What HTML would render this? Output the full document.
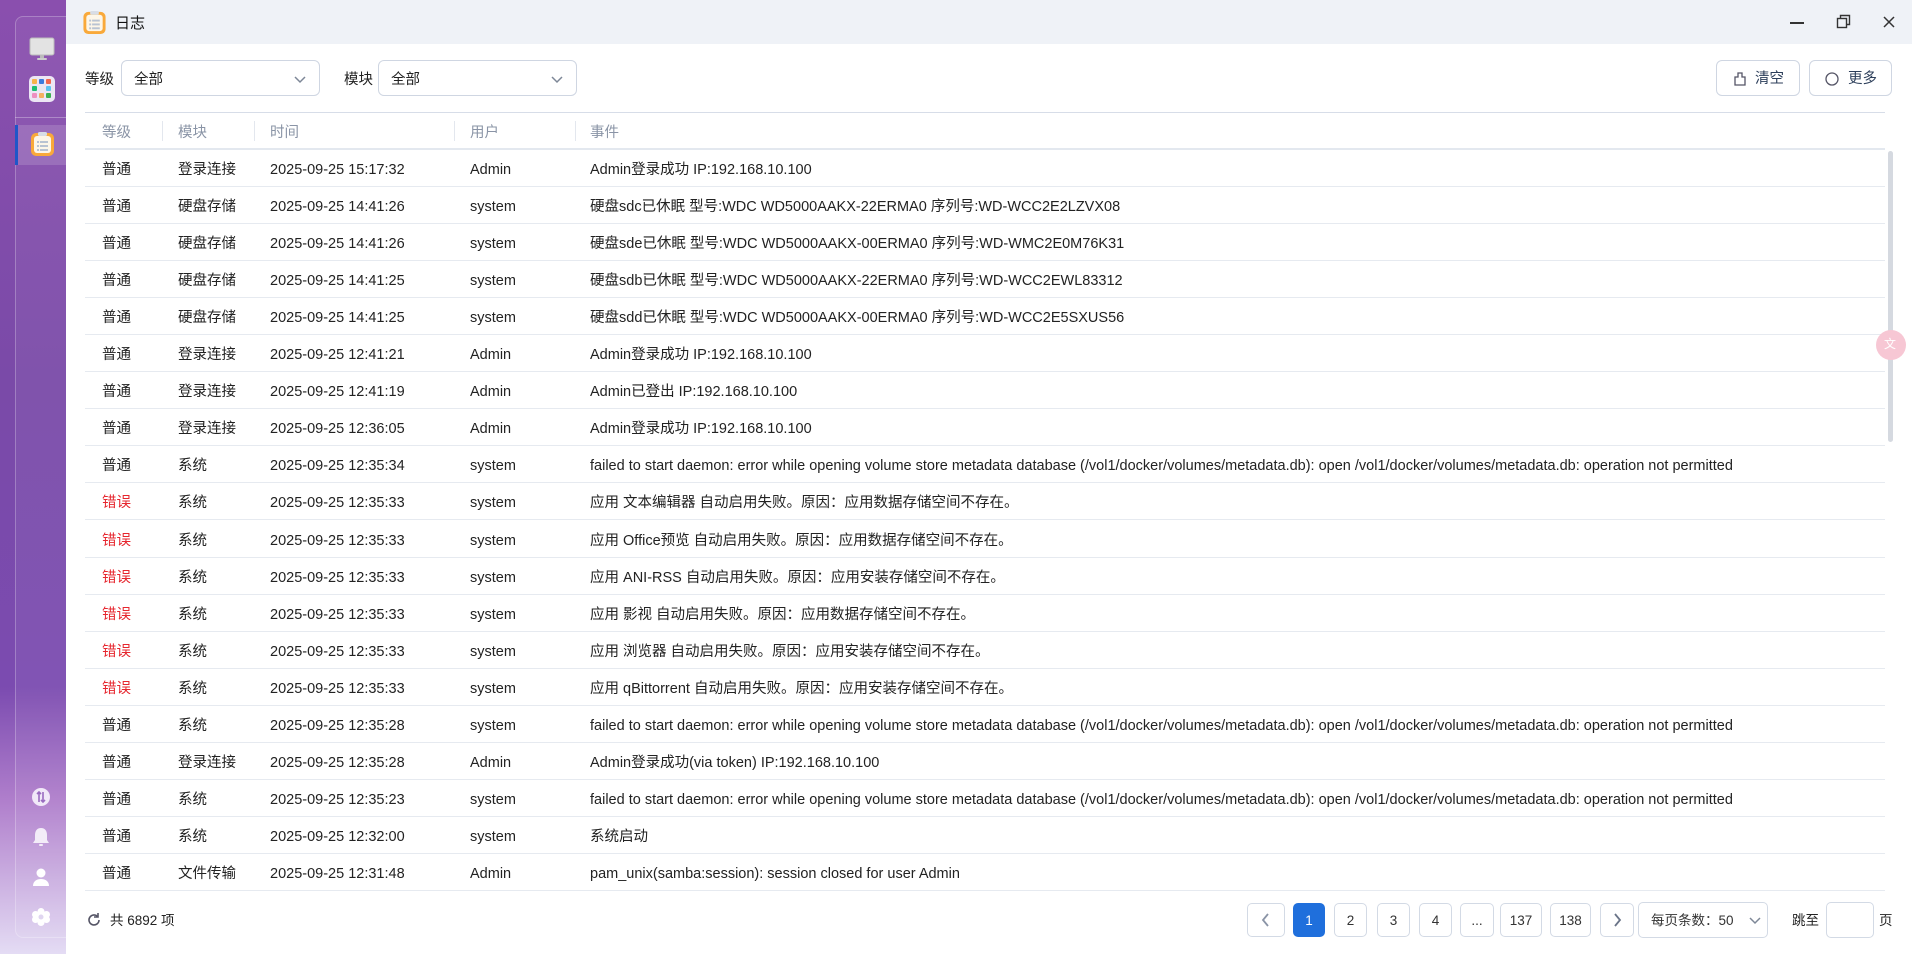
<!DOCTYPE html>
<html><head><meta charset="utf-8">
<style>
*{box-sizing:border-box;margin:0;padding:0}
body{width:1912px;height:954px;overflow:hidden;font-family:"Liberation Sans","Noto Sans CJK SC",sans-serif;font-size:14.5px;color:#222;background:#fff;position:relative}
.side{position:absolute;left:0;top:0;width:66px;height:954px;background:linear-gradient(180deg,#8a4fae 0%,#7a4aa8 40%,#7b4bb0 72%,#b07fcc 84%,#e4dcf4 100%)}
.panel{position:absolute;left:15px;top:16px;width:52px;height:922px;border:1px solid rgba(255,255,255,.25);border-right:none;border-radius:8px 0 0 8px;background:rgba(255,255,255,.05)}
.win{position:absolute;left:66px;top:0;width:1846px;height:954px;background:#fff}
.title{position:absolute;left:0;top:0;width:1846px;height:44px;background:#eff2f7}
.abs{position:absolute}
.sel{position:absolute;top:60px;height:36px;border:1px solid #cfd6e2;border-radius:6px;background:#fff}
.sel span{position:absolute;left:12px;top:2px;line-height:34px}
.chev{position:absolute;right:12px;top:11px}
.btn{position:absolute;top:60px;height:36px;border:1px solid #cfd6e2;border-radius:6px;background:#fff;color:#2c3e5a}
.hdr{position:absolute;left:19px;top:112px;width:1800px;height:38px;border-top:1px solid #d7dde8;border-bottom:2px solid #e3e8ef;color:#8a94a6}
.hdr div{position:absolute;top:3px;line-height:35px}
.hdr i{position:absolute;top:8px;width:1px;height:20px;background:#e3e7ee}
.row{position:absolute;left:19px;width:1800px;height:37px;border-bottom:1px solid #e6eaf0}
.row div{position:absolute;top:2px;line-height:36px;white-space:nowrap}
.r{color:#e6262e}
.pg{position:absolute;top:903px;height:34px;border:1px solid #d3dae5;border-radius:5px;text-align:center;line-height:33px;font-size:13.5px;color:#333;background:#fff}
</style></head><body>
<div class="side"><div class="panel"></div>
<svg class="abs" style="left:29px;top:37px" width="26" height="24" viewBox="0 0 26 24"><rect x="1" y="1" width="24" height="17" rx="2" fill="#e3e3e3" stroke="#bbb"/><rect x="11" y="18" width="4" height="3" fill="#bbb"/><rect x="8" y="21" width="10" height="2" rx="1" fill="#ccc"/></svg>
<div class="abs" style="left:29px;top:76px;width:26px;height:26px;border-radius:5px;background:#ece6f4"></div>
<svg class="abs" style="left:32px;top:79px" width="20" height="20"><rect x="0" y="0" width="5" height="5" rx="1" fill="#f8b34a"/><rect x="7" y="0" width="5" height="5" rx="1" fill="#3a7bde"/><rect x="14" y="0" width="5" height="5" rx="1" fill="#f2674e"/><rect x="0" y="7" width="5" height="5" rx="1" fill="#1fbf72"/><rect x="7" y="7" width="5" height="5" rx="1" fill="#e8e8f0"/><rect x="14" y="7" width="5" height="5" rx="1" fill="#5ec3f0"/><rect x="0" y="14" width="5" height="5" rx="1" fill="#ee8fc0"/><rect x="7" y="14" width="5" height="5" rx="1" fill="#f3b060"/><rect x="14" y="14" width="5" height="5" rx="1" fill="#3cb050"/></svg>
<div class="abs" style="left:15px;top:117px;width:51px;height:1px;background:rgba(255,255,255,.3)"></div>
<div class="abs" style="left:15px;top:125px;width:51px;height:40px;background:rgba(255,255,255,.15)"></div>
<div class="abs" style="left:15px;top:125px;width:3px;height:40px;background:#1f56c8"></div>
<svg class="abs" style="left:30px;top:131px" width="25" height="26" viewBox="0 0 25 26"><rect x="1" y="2" width="23" height="23" rx="5" fill="#f9a93a"/><rect x="4" y="5" width="17" height="17" rx="3" fill="#fdf6e8"/><rect x="8" y="1" width="9" height="4" rx="1.5" fill="#d8dde6"/><g fill="#b9c3d2"><rect x="7" y="10" width="2" height="2"/><rect x="10" y="10" width="8" height="2"/><rect x="7" y="14" width="2" height="2"/><rect x="10" y="14" width="8" height="2"/><rect x="7" y="18" width="2" height="2"/><rect x="10" y="18" width="8" height="2"/></g></svg>
<svg class="abs" style="left:31px;top:787px" width="20" height="20"><circle cx="10" cy="10" r="9" fill="#f1e8f8"/><path d="M8 5v10M6 7l2-2 2 2M12 15V5M10 13l2 2 2-2" stroke="#9a6cc0" stroke-width="1.6" fill="none"/></svg>
<svg class="abs" style="left:31px;top:826px" width="20" height="22"><path d="M10 2c-4 0-6 3-6 7v5l-2 3h16l-2-3V9c0-4-2-7-6-7z" fill="#f3ecf8"/><rect x="8" y="18" width="4" height="2" rx="1" fill="#f3ecf8"/></svg>
<svg class="abs" style="left:31px;top:867px" width="20" height="20"><circle cx="10" cy="6" r="4.5" fill="#fff"/><path d="M2 19c0-5 4-7 8-7s8 2 8 7z" fill="#fff"/></svg>
<svg class="abs" style="left:31px;top:907px" width="20" height="20"><g fill="#fff"><circle cx="10" cy="4.5" r="3.5"/><circle cx="10" cy="15.5" r="3.5"/><circle cx="4.5" cy="7.5" r="3.5"/><circle cx="15.5" cy="7.5" r="3.5"/><circle cx="4.5" cy="12.5" r="3.5"/><circle cx="15.5" cy="12.5" r="3.5"/><circle cx="10" cy="10" r="5"/></g><circle cx="10" cy="10" r="2.5" fill="#e0d6f0"/></svg>
</div>
<div class="win">
<div class="title">
<svg class="abs" style="left:16px;top:10px" width="25" height="25" viewBox="0 0 25 26"><rect x="1" y="2" width="23" height="23" rx="5" fill="#f9a93a"/><rect x="4" y="5" width="17" height="17" rx="3" fill="#fdf6e8"/><rect x="8" y="1" width="9" height="4" rx="1.5" fill="#d8dde6"/><g fill="#b9c3d2"><rect x="7" y="10" width="2" height="2"/><rect x="10" y="10" width="8" height="2"/><rect x="7" y="14" width="2" height="2"/><rect x="10" y="14" width="8" height="2"/><rect x="7" y="18" width="2" height="2"/><rect x="10" y="18" width="8" height="2"/></g></svg>
<div class="abs" style="left:49px;top:2px;line-height:44px;font-size:15px;color:#111">日志</div>
<div class="abs" style="left:1724px;top:22px;width:14px;height:1.5px;background:#333"></div>
<svg class="abs" style="left:1770px;top:14px" width="15" height="15"><rect x="1.5" y="4.5" width="9" height="9" fill="none" stroke="#333" stroke-width="1.4"/><path d="M4.5 4.5V1.5h9v9h-3" fill="none" stroke="#333" stroke-width="1.4"/></svg>
<svg class="abs" style="left:1816px;top:15px" width="14" height="14"><path d="M2 2l10 10M12 2L2 12" stroke="#333" stroke-width="1.5"/></svg>
</div>
<div class="abs" style="left:19px;top:62px;line-height:36px">等级</div>
<div class="sel" style="left:55px;width:199px"><span>全部</span><svg class="chev" width="14" height="14"><path d="M2 5l5 5 5-5" stroke="#7d8797" stroke-width="1.5" fill="none"/></svg></div>
<div class="abs" style="left:278px;top:62px;line-height:36px">模块</div>
<div class="sel" style="left:312px;width:199px"><span>全部</span><svg class="chev" width="14" height="14"><path d="M2 5l5 5 5-5" stroke="#7d8797" stroke-width="1.5" fill="none"/></svg></div>
<div class="btn" style="left:1650px;width:84px"><svg class="abs" style="left:16px;top:11px" width="14" height="14"><path d="M5 1h4v4h3v8H2V5h3z" fill="none" stroke="#556" stroke-width="1.3"/></svg><span class="abs" style="left:38px;top:1px;line-height:34px">清空</span></div>
<div class="btn" style="left:1743px;width:83px"><svg class="abs" style="left:15px;top:11px" width="14" height="14"><circle cx="7" cy="7" r="6" fill="none" stroke="#556" stroke-width="1.3"/></svg><span class="abs" style="left:38px;top:1px;line-height:34px">更多</span></div>
<div class="hdr"><div style="left:17px">等级</div><i style="left:77px"></i><div style="left:93px">模块</div><i style="left:169px"></i><div style="left:185px">时间</div><i style="left:369px"></i><div style="left:385px">用户</div><i style="left:490px"></i><div style="left:505px">事件</div></div>
<div id="rows"></div>
<div class="abs" style="left:1822px;top:151px;width:5px;height:291px;border-radius:3px;background:#d5d9e0"></div>
<div class="abs" style="left:1810px;top:330px;width:30px;height:30px;border-radius:15px;background:#f7c7d4"></div>
<div class="abs" style="left:1818px;top:335px;font-size:12px;color:#fff">文</div>
<svg class="abs" style="left:20px;top:912px" width="16" height="16"><path d="M13 8a5 5 0 1 1-1.6-3.7" fill="none" stroke="#556" stroke-width="1.6"/><path d="M12 1v4H8" fill="none" stroke="#556" stroke-width="1.6"/></svg>
<div class="abs" style="left:44px;top:904px;line-height:34px;font-size:13.5px">共 6892 项</div>
<div class="pg" style="left:1181px;width:38px;color:#99a"><svg width="12" height="32"><path d="M8 10l-5 6 5 6" stroke="#8a94a6" stroke-width="1.8" fill="none"/></svg></div>
<div class="pg" style="left:1227px;width:32px;background:#1f6fdc;border-color:#1f6fdc;color:#fff">1</div>
<div class="pg" style="left:1268px;width:33px">2</div>
<div class="pg" style="left:1311px;width:33px">3</div>
<div class="pg" style="left:1353px;width:33px">4</div>
<div class="pg" style="left:1394px;width:34px">...</div>
<div class="pg" style="left:1434px;width:42px">137</div>
<div class="pg" style="left:1484px;width:41px">138</div>
<div class="pg" style="left:1534px;width:34px"><svg width="12" height="32"><path d="M4 10l5 6-5 6" stroke="#6a7488" stroke-width="1.8" fill="none"/></svg></div>
<div class="pg" style="left:1572px;width:130px;top:902px;height:36px;line-height:35px;text-align:left;padding-left:12px">每页条数：50<svg class="abs" style="left:110px;top:11px" width="12" height="12"><path d="M1 4l5 5 5-5" stroke="#7d8797" stroke-width="1.5" fill="none"/></svg></div>
<div class="abs" style="left:1726px;top:904px;line-height:34px;font-size:13.5px">跳至</div>
<div class="pg" style="left:1760px;width:48px;top:902px;height:36px"></div>
<div class="abs" style="left:1813px;top:904px;line-height:34px;font-size:13.5px">页</div>
</div>
<script>
var d=[["普通","登录连接","2025-09-25 15:17:32","Admin","Admin登录成功 IP:192.168.10.100"],
["普通","硬盘存储","2025-09-25 14:41:26","system","硬盘sdc已休眠 型号:WDC WD5000AAKX-22ERMA0 序列号:WD-WCC2E2LZVX08"],
["普通","硬盘存储","2025-09-25 14:41:26","system","硬盘sde已休眠 型号:WDC WD5000AAKX-00ERMA0 序列号:WD-WMC2E0M76K31"],
["普通","硬盘存储","2025-09-25 14:41:25","system","硬盘sdb已休眠 型号:WDC WD5000AAKX-22ERMA0 序列号:WD-WCC2EWL83312"],
["普通","硬盘存储","2025-09-25 14:41:25","system","硬盘sdd已休眠 型号:WDC WD5000AAKX-00ERMA0 序列号:WD-WCC2E5SXUS56"],
["普通","登录连接","2025-09-25 12:41:21","Admin","Admin登录成功 IP:192.168.10.100"],
["普通","登录连接","2025-09-25 12:41:19","Admin","Admin已登出 IP:192.168.10.100"],
["普通","登录连接","2025-09-25 12:36:05","Admin","Admin登录成功 IP:192.168.10.100"],
["普通","系统","2025-09-25 12:35:34","system","failed to start daemon: error while opening volume store metadata database (/vol1/docker/volumes/metadata.db): open /vol1/docker/volumes/metadata.db: operation not permitted"],
["错误","系统","2025-09-25 12:35:33","system","应用 文本编辑器 自动启用失败。原因：应用数据存储空间不存在。"],
["错误","系统","2025-09-25 12:35:33","system","应用 Office预览 自动启用失败。原因：应用数据存储空间不存在。"],
["错误","系统","2025-09-25 12:35:33","system","应用 ANI-RSS 自动启用失败。原因：应用安装存储空间不存在。"],
["错误","系统","2025-09-25 12:35:33","system","应用 影视 自动启用失败。原因：应用数据存储空间不存在。"],
["错误","系统","2025-09-25 12:35:33","system","应用 浏览器 自动启用失败。原因：应用安装存储空间不存在。"],
["错误","系统","2025-09-25 12:35:33","system","应用 qBittorrent 自动启用失败。原因：应用安装存储空间不存在。"],
["普通","系统","2025-09-25 12:35:28","system","failed to start daemon: error while opening volume store metadata database (/vol1/docker/volumes/metadata.db): open /vol1/docker/volumes/metadata.db: operation not permitted"],
["普通","登录连接","2025-09-25 12:35:28","Admin","Admin登录成功(via token) IP:192.168.10.100"],
["普通","系统","2025-09-25 12:35:23","system","failed to start daemon: error while opening volume store metadata database (/vol1/docker/volumes/metadata.db): open /vol1/docker/volumes/metadata.db: operation not permitted"],
["普通","系统","2025-09-25 12:32:00","system","系统启动"],
["普通","文件传输","2025-09-25 12:31:48","Admin","pam_unix(samba:session): session closed for user Admin"]];
var h="";d.forEach(function(r,i){h+='<div class="row" style="top:'+(150+i*37.05)+'px"><div style="left:17px" class="'+(r[0]=="错误"?"r":"")+'">'+r[0]+'</div><div style="left:93px">'+r[1]+'</div><div style="left:185px">'+r[2]+'</div><div style="left:385px">'+r[3]+'</div><div style="left:505px">'+r[4]+'</div></div>';});
document.getElementById("rows").innerHTML=h;
</script>
</body></html>
